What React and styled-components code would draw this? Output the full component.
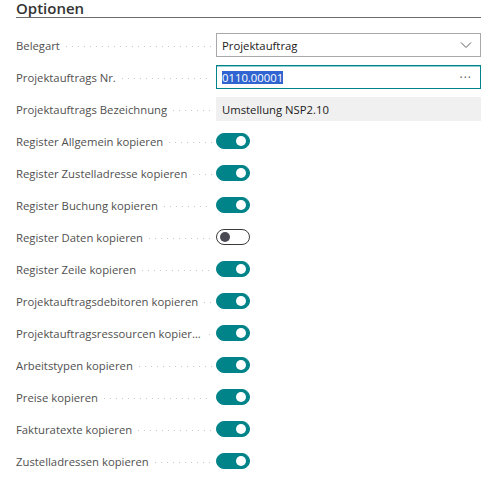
import React from "react";
import styled, { createGlobalStyle } from "styled-components";

const GlobalStyle = createGlobalStyle`
  html, body {
    margin: 0;
    padding: 0;
    background: #fff;
  }
  body {
    font-family: "Open Sans", "Noto Sans", sans-serif;
    color: #212121;
  }
`;

const textFields = [
  { label: "Belegart", kind: "select", value: "Projektauftrag" },
  { label: "Projektauftrags Nr.", kind: "lookup", value: "0110.00001" },
  { label: "Projektauftrags Bezeichnung", kind: "readonly", value: "Umstellung NSP2.10" }
];

const toggles = [
  { label: "Register Allgemein kopieren", on: true },
  { label: "Register Zustelladresse kopieren", on: true },
  { label: "Register Buchung kopieren", on: true },
  { label: "Register Daten kopieren", on: false },
  { label: "Register Zeile kopieren", on: true },
  { label: "Projektauftragsdebitoren kopieren", on: true },
  { label: "Projektauftragsressourcen kopieren", on: true },
  { label: "Arbeitstypen kopieren", on: true },
  { label: "Preise kopieren", on: true },
  { label: "Fakturatexte kopieren", on: true },
  { label: "Zustelladressen kopieren", on: true }
];

export default function App() {
  return (
    <>
      <GlobalStyle />
      <Section>
        <Title>Optionen</Title>
        <Rows>
          {textFields.map((f) => (
            <Row key={f.label}>
              <Caption label={f.label} />
              <Field kind={f.kind}>
                {f.kind === "lookup" ? (
                  <Selected>{f.value}</Selected>
                ) : (
                  <FieldText>{f.value}</FieldText>
                )}
                {f.kind === "select" && (
                  <svg width="12" height="8" viewBox="0 0 12 8">
                    <path d="M1 1.5 L6 6.5 L11 1.5" fill="none" stroke="#605e5c" strokeWidth="1" />
                  </svg>
                )}
                {f.kind === "lookup" && <Ellipsis>···</Ellipsis>}
              </Field>
            </Row>
          ))}
          {toggles.map((t) => (
            <Row key={t.label}>
              <Caption label={t.label} />
              <Switch $on={t.on}>
                <Knob $on={t.on} />
              </Switch>
            </Row>
          ))}
        </Rows>
      </Section>
    </>
  );
}

function Caption({ label }) {
  return (
    <LabelCell>
      <LabelText>{label}</LabelText>
      <Leader />
    </LabelCell>
  );
}

const Section = styled.div`
  width: 465px;
  padding-left: 16px;
  padding-top: 1px;
`;

const Title = styled.div`
  font-size: 15px;
  font-weight: 600;
  line-height: 15px;
  color: #333;
  padding-bottom: 1px;
  border-bottom: 1.5px solid #6b6b6b;
`;

const Rows = styled.div`
  display: flex;
  flex-direction: column;
  padding-top: 11px;
`;

const Row = styled.div`
  display: flex;
  align-items: center;
  height: 32px;
`;

const LabelCell = styled.div`
  display: flex;
  align-items: center;
  width: 200px;
  flex: none;
  overflow: hidden;
`;

const LabelText = styled.span`
  font-size: 11.3px;
  color: #505050;
  white-space: nowrap;
  overflow: hidden;
  text-overflow: ellipsis;
  flex: 0 1 auto;
`;

const Leader = styled.span`
  flex: 1 0 3px;
  height: 1px;
  margin: 2px 4px 0 6px;
  background-image: linear-gradient(to right, #c8c8c8 1px, transparent 1px);
  background-size: 6px 1px;
  background-repeat: repeat-x;
`;

const Field = styled.div`
  box-sizing: border-box;
  display: flex;
  align-items: center;
  justify-content: space-between;
  width: 265px;
  height: 24px;
  padding: 0 8px 0 5px;
  background: ${(p) => (p.kind === "readonly" ? "#f0f0f0" : "#fff")};
  border: 1px solid
    ${(p) =>
      p.kind === "lookup" ? "#00848a" : p.kind === "select" ? "#a8a8a8" : "#f0f0f0"};
  box-shadow: ${(p) => (p.kind === "lookup" ? "inset 0 1px 0 #8fcfd1" : "none")};
`;

const FieldText = styled.span`
  font-size: 11.3px;
  color: #212121;
`;

const Selected = styled.span`
  font-size: 11.3px;
  line-height: 13px;
  color: #fff;
  background: #3064d0;
`;

const Ellipsis = styled.span`
  font-size: 12px;
  color: #605e5c;
  letter-spacing: 1px;
`;

const Switch = styled.div`
  box-sizing: border-box;
  width: 34px;
  height: 16px;
  border-radius: 8px;
  display: flex;
  align-items: center;
  padding: 0 3px;
  justify-content: ${(p) => (p.$on ? "flex-end" : "flex-start")};
  background: ${(p) => (p.$on ? "#00848a" : "#fff")};
  border: 1px solid ${(p) => (p.$on ? "#00848a" : "#3a3a3a")};
`;

const Knob = styled.span`
  width: 10px;
  height: 10px;
  border-radius: 50%;
  background: ${(p) => (p.$on ? "#fff" : "#4a4a55")};
`;
